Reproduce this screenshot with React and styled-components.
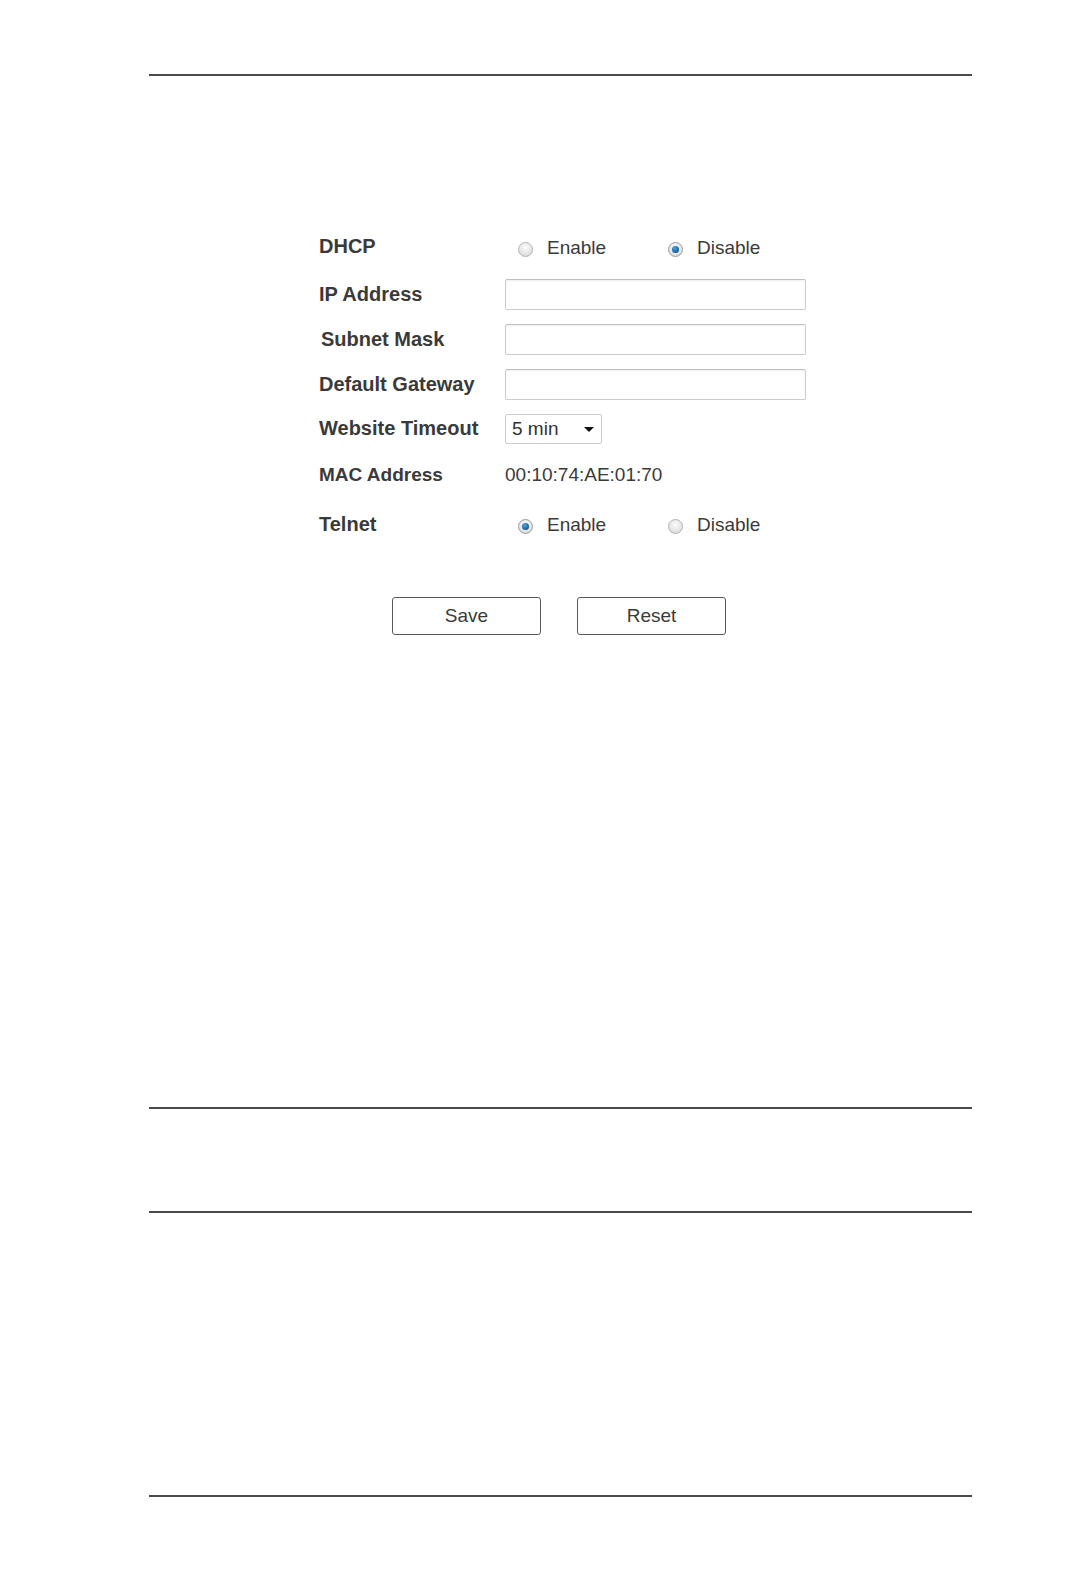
import React, { useState } from "react";
import styled, { createGlobalStyle } from "styled-components";

const GlobalStyle = createGlobalStyle`
    html, body {
        margin: 0;
        padding: 0;
        background: #ffffff;
    }
    body {
        font-family: "Liberation Sans", Arial, sans-serif;
        color: #333333;
    }
`

const Page = styled.div`
    width: 1086px;
    height: 1573px;
    box-sizing: border-box;
    padding-left: 149px;
    display: flex;
    flex-direction: column;
`

const Rule = styled.div`
    width: 823px;
    height: 2px;
    background-color: #4a4a4a;
    margin-top: ${(p) => p.top}px;
`

// form styling

const Form = styled.div`
    margin-top: 146px;
    margin-left: 170px;
    display: flex;
    flex-direction: column;
`

const Row = styled.div`
    display: flex;
    align-items: center;
    height: ${(p) => p.h}px;
`

const Label = styled.div`
    width: ${(p) => 186 - (p.shift || 0)}px;
    margin-left: ${(p) => p.shift || 0}px;
    font-size: ${(p) => p.size || 20}px;
    font-weight: bold;
    color: #3a3a3a;
`

const Value = styled.div`
    font-size: 19px;
    color: #3a3a3a;
`

const TextInput = styled.input`
    box-sizing: border-box;
    width: 301px;
    height: 31px;
    border: 1px solid #cbcbd0;
    border-top-color: #bfbfc4;
    border-radius: 2px;
    box-shadow: inset 0 1px 2px rgba(0, 0, 0, 0.07);
    background: #ffffff;
    outline: none;
    padding: 0 6px;
    font-family: "Liberation Sans", Arial, sans-serif;
    font-size: 17px;
`

const RadioGroup = styled.div`
    display: flex;
    align-items: center;
    padding-left: 13px;
    margin-top: 2px;
`

const RadioItem = styled.label`
    width: 150px;
    display: flex;
    align-items: center;
    cursor: pointer;
    font-size: 19px;
    color: #3a3a3a;
`

const RadioDot = styled.span`
    box-sizing: border-box;
    width: 15px;
    height: 15px;
    border-radius: 50%;
    border: 1px solid ${(p) => (p.checked ? "#9a9a9a" : "#b4b4b4")};
    background: radial-gradient(circle at 50% 35%, #fbfbfb 0%, #e4e4e4 60%, #cfcfcf 100%);
    display: flex;
    align-items: center;
    justify-content: center;
    margin-right: 14px;
    margin-top: 3px;
    &::after {
        content: "";
        display: ${(p) => (p.checked ? "block" : "none")};
        width: 7px;
        height: 7px;
        border-radius: 50%;
        background: radial-gradient(circle at 40% 35%, #4aa3e0 0%, #1a66a8 60%, #0e3f6e 100%);
    }
`

const SelectBox = styled.div`
    box-sizing: border-box;
    width: 97px;
    height: 30px;
    border: 1px solid #cbcbd0;
    border-radius: 2px;
    display: flex;
    align-items: center;
    justify-content: space-between;
    padding: 0 7px 0 6px;
    font-size: 19px;
    color: #333333;
`

const Caret = styled.span`
    width: 0;
    height: 0;
    border-left: 5px solid transparent;
    border-right: 5px solid transparent;
    border-top: 5px solid #111111;
    margin-top: 2px;
`

const ButtonBar = styled.div`
    display: flex;
    gap: 36px;
    margin-top: 48px;
    margin-left: 243px;
`

const Button = styled.button`
    box-sizing: border-box;
    width: 149px;
    height: 38px;
    border: 1.5px solid #5a5a5a;
    border-radius: 3px;
    background: #ffffff;
    font-family: "Liberation Sans", Arial, sans-serif;
    font-size: 19px;
    color: #3a3a3a;
    cursor: pointer;
    padding: 0;
`

function RadioPair({ value, onChange }) {
    return (
        <RadioGroup>
            <RadioItem onClick={() => onChange(true)}>
                <RadioDot checked={value} />
                Enable
            </RadioItem>
            <RadioItem onClick={() => onChange(false)}>
                <RadioDot checked={!value} />
                Disable
            </RadioItem>
        </RadioGroup>
    );
}

export default function App() {
    const [dhcp, setDhcp] = useState(false);
    const [telnet, setTelnet] = useState(true);

    return (
        <>
            <GlobalStyle />
            <Page>
                <Rule top={74} />

                <Form>
                    <Row h={49}>
                        <Label>DHCP</Label>
                        <RadioPair value={dhcp} onChange={setDhcp} />
                    </Row>
                    <Row h={46}>
                        <Label>IP Address</Label>
                        <TextInput />
                    </Row>
                    <Row h={45}>
                        <Label shift={2}>Subnet Mask</Label>
                        <TextInput />
                    </Row>
                    <Row h={44}>
                        <Label>Default Gateway</Label>
                        <TextInput />
                    </Row>
                    <Row h={45}>
                        <Label>Website Timeout</Label>
                        <SelectBox>
                            5 min
                            <Caret />
                        </SelectBox>
                    </Row>
                    <Row h={48}>
                        <Label size={19}>MAC Address</Label>
                        <Value>00:10:74:AE:01:70</Value>
                    </Row>
                    <Row h={50}>
                        <Label>Telnet</Label>
                        <RadioPair value={telnet} onChange={setTelnet} />
                    </Row>
                </Form>

                <ButtonBar>
                    <Button>Save</Button>
                    <Button>Reset</Button>
                </ButtonBar>

                <Rule top={472} />
                <Rule top={102} />
                <Rule top={282} />
            </Page>
        </>
    );
}
